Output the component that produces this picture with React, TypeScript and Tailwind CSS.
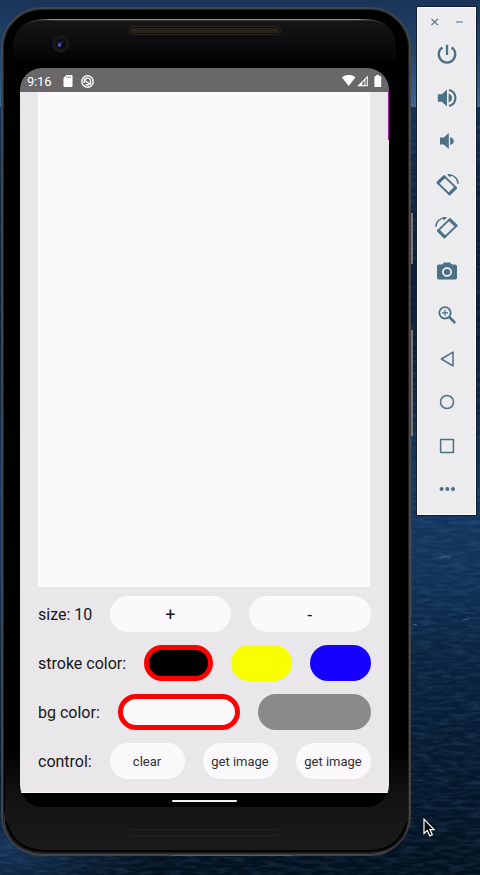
import type { ReactNode } from "react";
import { MdPhotoCamera } from "react-icons/md";

function Wallpaper() {
  return (
    <svg className="absolute inset-0" width="480" height="875" aria-hidden="true">
      <defs>
        <linearGradient id="sky" x1="0" y1="0" x2="0" y2="1">
          <stop offset="0" stopColor="#193457" />
          <stop offset="0.5" stopColor="#21456f" />
          <stop offset="1" stopColor="#3b6799" />
        </linearGradient>
        <linearGradient id="sea" x1="0" y1="0" x2="0" y2="1">
          <stop offset="0" stopColor="#12335a" />
          <stop offset="0.13" stopColor="#0b213e" />
          <stop offset="0.3" stopColor="#091d37" />
          <stop offset="0.5" stopColor="#113760" />
          <stop offset="0.6" stopColor="#11335b" />
          <stop offset="0.72" stopColor="#0a233f" />
          <stop offset="0.85" stopColor="#061b31" />
          <stop offset="1" stopColor="#03111f" />
        </linearGradient>
        <radialGradient id="glow">
          <stop offset="0" stopColor="#1e4473" stopOpacity="0.65" />
          <stop offset="1" stopColor="#1e4473" stopOpacity="0" />
        </radialGradient>
        <filter id="waves" x="0" y="0" width="1" height="1">
          <feTurbulence type="fractalNoise" baseFrequency="0.06 0.28" numOctaves="3" seed="7" />
          <feColorMatrix values="0 0 0 0 0.12  0 0 0 0 0.28  0 0 0 0 0.47  1.6 0 0 0 -0.65" />
        </filter>
      </defs>
      <rect width="480" height="107" fill="url(#sky)" />
      <rect y="107" width="480" height="768" fill="url(#sea)" />
      <ellipse cx="0" cy="850" rx="150" ry="60" fill="url(#glow)" />
      <rect y="125" width="480" height="750" filter="url(#waves)" opacity="0.28" />
      <path d="M439 558q5-2 12-1M463 620l6-1M412 624l5 1" stroke="#48719d" strokeWidth="0.8" fill="none" />
    </svg>
  );
}

function StatusBar() {
  return (
    <div className="flex h-[24px] shrink-0 items-center bg-[#69676a] pl-[7px] pr-[7px] pt-[2px] text-white">
      <span className="w-[36px] text-[13px] leading-none tracking-[-0.2px]">9:16</span>
      <svg width="10" height="12" viewBox="0 0 9 12" className="relative" aria-hidden="true">
        <path d="M3 0h5q1 0 1 1v10q0 1-1 1H1q-1 0-1-1V3z" fill="currentColor" />
        <path d="M3 2.2h5" stroke="#8b898c" strokeWidth="1.4" strokeDasharray="1 .7" />
      </svg>
      <svg width="13" height="13" viewBox="0 0 13 13" className="ml-[8px]" fill="none" stroke="currentColor" aria-hidden="true">
        <circle cx="6.5" cy="6.5" r="5.7" strokeWidth="1.4" />
        <path d="M3.2 8V6.5a3.3 3.3 0 0 1 6.2-1.6M3.8 5.5l5.6 4M9.6 5.2v3L7 9.7H4.5" strokeWidth="1.4" />
      </svg>
      <span className="flex-1" />
      <svg width="40" height="12" viewBox="0 0 40 12" aria-hidden="true">
        <path d="M0 2.6C4-1 9.6-1 13.4 2.6L6.7 11z" fill="currentColor" />
        <path d="M15.2 11.2h10.6V.4z" fill="currentColor" />
        <path d="M20.4 10.2V7.4l2-2v4.8zM23.4 10.2V4.6l1.4-1.5v7.1z" fill="#69676a" />
        <path d="M34.2 0h3v1.3h2V12h-6.8V1.3h1.8z" fill="currentColor" />
      </svg>
    </div>
  );
}

function Row({ label, children }: { label: string; children: ReactNode }) {
  return (
    <div className="flex h-[36px] items-center">
      <span className="shrink-0 whitespace-nowrap pt-[2px] text-[16px] leading-none text-[#171719]">{label}</span>
      <div className="ml-auto flex gap-[18px]">{children}</div>
    </div>
  );
}

const pill = "flex h-[36px] items-center justify-center rounded-full whitespace-nowrap leading-none";

function AppScreen() {
  return (
    <div className="flex h-[739px] w-[369px] shrink-0 flex-col overflow-hidden rounded-[22px] bg-black">
      <StatusBar />
      <div className="relative flex h-[701px] shrink-0 flex-col border-b border-[#f8f7f9] bg-[#e9e7e9] px-[18px]">
        <div className="h-[495px] w-[332px] shrink-0 bg-[#fbf9fc]" />
        <div className="mt-[9px] flex w-[332.5px] flex-col gap-[13.1px]">
          <Row label="size: 10">
            <button className={`${pill} w-[121.5px] bg-[#fbf9fc] pt-[2px] text-[18px] text-[#202022]`}>+</button>
            <button className={`${pill} w-[121.5px] bg-[#fbf9fc] pt-[2px] text-[18px] text-[#202022]`}>-</button>
          </Row>
          <Row label="stroke color:">
            <button aria-label="black" className={`${pill} w-[69.5px] border-[5px] border-[#ff0000] bg-black`} />
            <button aria-label="yellow" className={`${pill} w-[61px] bg-[#f8ff00]`} />
            <button aria-label="blue" className={`${pill} w-[60.5px] bg-[#1800ff]`} />
          </Row>
          <Row label="bg color:">
            <button aria-label="white" className={`${pill} w-[122px] border-[5px] border-[#ff0000] bg-[#fbf9fc]`} />
            <button aria-label="gray" className={`${pill} w-[113px] bg-[#8b898c]`} />
          </Row>
          <Row label="control:">
            <button className={`${pill} w-[75px] bg-[#fbf9fc] pt-px text-[13px] text-[#303032]`}>clear</button>
            <button className={`${pill} w-[75px] bg-[#fbf9fc] pt-px text-[13px] text-[#303032]`}>get image</button>
            <button className={`${pill} w-[75px] bg-[#fbf9fc] pt-px text-[13px] text-[#303032]`}>get image</button>
          </Row>
        </div>
        <span className="absolute right-0 top-0 h-[48px] w-[1px] bg-[#a414ac]" />
      </div>
      <div className="flex h-[14px] items-center justify-center pt-px">
        <span className="h-[2px] w-[65px] rounded-full bg-[#f1f0f2]" />
      </div>
    </div>
  );
}

function Phone() {
  return (
    <div className="relative mt-[7px] ml-px flex h-[849px] w-[410px] shrink-0 flex-col rounded-[41px] border-2 border-[#454446] bg-black shadow-[inset_0_0_0_1px_#222123]">
      <svg className="absolute -left-[2px] -top-[2px]" width="412" height="851" aria-hidden="true">
        <defs>
          <linearGradient id="forehead" x1="0" y1="0" x2="0" y2="1">
            <stop offset="0" stopColor="#171618" />
            <stop offset="1" stopColor="#030304" />
          </linearGradient>
          <linearGradient id="chin" x1="0" y1="0" x2="0" y2="1">
            <stop offset="0" stopColor="#000" />
            <stop offset="0.45" stopColor="#131213" />
            <stop offset="1" stopColor="#1c1b1c" />
          </linearGradient>
          <linearGradient id="edge" x1="0" y1="0" x2="1" y2="0">
            <stop offset="0" stopColor="#555" stopOpacity="0" />
            <stop offset="0.08" stopColor="#8b8b8d" />
            <stop offset="0.92" stopColor="#8b8b8d" />
            <stop offset="1" stopColor="#555" stopOpacity="0" />
          </linearGradient>
        </defs>
        <path d="M12 54V42q0-29 29-29h326q28 0 28 29v12z" fill="url(#forehead)" />
        <path d="M22 20q8-7.3 21-7.3h322q13 0 21 7.3" fill="none" stroke="url(#edge)" strokeWidth="1.2" />
        <path d="M4 740h403v68q0 37-38 37H41q-37 0-37-37z" fill="url(#chin)" />
        <path d="M5 815q8 29 40 29h322q31 0 39-29" fill="none" stroke="#020202" strokeWidth="2" />
        <path d="M3 806q0 40 39 40h328q38 0 38-40" fill="none" stroke="#333133" strokeWidth="1" />
        <path d="M171 848.5h120" stroke="#5c5b5d" strokeWidth="1" />
        <circle cx="60" cy="37" r="8" fill="#171517" stroke="#201e20" />
        <circle cx="60" cy="37" r="5" fill="#09080c" />
        <ellipse cx="58.5" cy="37.5" rx="2" ry="2.6" fill="#38369d" />
        <path d="M60 36l3-2" stroke="#2b2a63" />
        <circle cx="58.5" cy="38.5" r="1" fill="#6868d4" />
      </svg>
      <div className="relative mt-[17px] ml-[125px] h-[9px] w-[153px] shrink-0 rounded-full border border-[#2b2622] bg-[#100e0d] p-px">
        <div className="h-full rounded-full bg-[#29231f]" />
      </div>
      <div className="relative mt-[33px] ml-[17px]">
        <AppScreen />
      </div>
      <div className="relative mt-[22px] ml-[125px] h-[7px] w-[153px] shrink-0 rounded-full border border-[#232223] bg-[repeating-linear-gradient(90deg,#111_0px,#111_1px,#1e1d1e_1px,#1e1d1e_2px)]" />
      <span className="absolute -right-[4px] top-[204px] h-[51px] w-[2px] bg-[#777578]" />
      <span className="absolute -right-[4px] top-[321px] h-[106px] w-[2px] bg-[#777578]" />
      <span className="absolute -right-[3px] top-[427px] h-[181px] w-px bg-[#303e4b]" />
    </div>
  );
}

function RotateIcon({ mirrored = false }: { mirrored?: boolean }) {
  return (
    <svg width="24" height="24" viewBox="0 0 24 24" className={mirrored ? "-scale-x-100" : ""} fill="none" stroke="currentColor" aria-hidden="true">
      <path d="M9.3 3.4 21 14.6 14.4 21.2 2.6 9.9z" strokeWidth="1.9" strokeLinejoin="round" />
      <path d="m9.1 3.9-6 5.8M20.4 14.9l-5.8 5.8" strokeWidth="3.2" strokeLinecap="round" />
      <path d="M13.2 1.9c5.6-.5 9.9 3.6 9.9 8.9" strokeWidth="1.4" />
      <path d="M12 1.2h4.5l-1.4 3.2z" fill="currentColor" stroke="none" />
    </svg>
  );
}

function Outline({ d }: { d: string }) {
  return (
    <svg width="18" height="18" viewBox="0 0 18 18" fill="none" stroke="currentColor" strokeWidth="1.5" strokeLinejoin="round" aria-hidden="true">
      <path d={d} />
    </svg>
  );
}

function EmulatorToolbar() {
  const tools: ReactNode[] = [
    <svg width="22" height="22" viewBox="0 0 24 24" fill="none" stroke="currentColor" strokeWidth="2.5" aria-hidden="true">
      <path d="M12 2V13M7 4.9a9 9 0 1 0 10 0" />
    </svg>,
    <svg width="20" height="20" viewBox="0 0 20 20" fill="currentColor" aria-hidden="true">
      <path d="M.8 6.2h4L10 1.4v17.2l-5.2-4.8h-4zM11.6 5.4q3.4 1.3 3.4 4.6t-3.4 4.6z" />
      <path d="M12 2q6.4 1.7 6.4 8t-6.4 8" fill="none" stroke="currentColor" strokeWidth="2.1" />
    </svg>,
    <svg width="16" height="18" viewBox="0 0 16 18" fill="currentColor" aria-hidden="true">
      <path d="M1 5.6h3.7L9.8 1v16l-5.1-4.6H1zM11.2 4.9q3.6 1.3 3.6 4.1t-3.6 4.1z" />
    </svg>,
    <RotateIcon />,
    <RotateIcon mirrored />,
    <MdPhotoCamera size={24} className="scale-y-95" />,
    <svg width="20" height="20" viewBox="0 0 20 20" fill="none" stroke="currentColor" aria-hidden="true">
      <circle cx="8" cy="7.8" r="5.7" strokeWidth="1.8" />
      <path d="m12.2 12 6 6" strokeWidth="2.5" />
      <path d="M5 7.8h6M8 4.8v6" strokeWidth="1.2" />
    </svg>,
    <Outline d="M3.4 9 15 2.1v13.8z" />,
    <Outline d="M15.5 9A6.5 6.5 0 1 1 2.5 9a6.5 6.5 0 0 1 13 0" />,
    <Outline d="M2.6 2.6h12.8v12.8H2.6z" />,
    <svg width="18" height="6" viewBox="0 0 18 6" fill="currentColor" aria-hidden="true">
      <circle cx="3.6" cy="3" r="2" />
      <circle cx="9.3" cy="3" r="2" />
      <circle cx="15" cy="3" r="2" />
    </svg>,
  ];
  return (
    <div className="relative mt-[7px] ml-[6px] h-[508px] w-[59px] shrink-0 border border-[#fafafa] bg-[#ecebed] text-[#4b7187] shadow-[0_0_0_1px_#101d30]">
      <div className="flex h-[24.5px] items-center pl-[12px] pt-[4px]">
        <svg width="36" height="10" viewBox="0 0 36 10" fill="none" stroke="currentColor" strokeWidth="1.2" aria-hidden="true">
          <path d="m1.5 1.8 6.4 6.4M7.9 1.8 1.5 8.2M26 5h7" />
        </svg>
      </div>
      <div className="flex flex-col">
        {tools.map((icon, i) => (
          <div key={i} className="flex h-[43.5px] items-center justify-center">{icon}</div>
        ))}
      </div>
    </div>
  );
}

export default function App() {
  return (
    <main className="relative flex h-[875px] w-[480px] items-start overflow-hidden bg-[#0b213e] font-['Roboto',sans-serif]">
      <Wallpaper />
      <Phone />
      <EmulatorToolbar />
      <svg className="absolute left-[422px] top-[818px]" width="13" height="20" viewBox="0 0 13 20" aria-hidden="true">
        <path d="M2 1.2v14.3l3.3-3 2.5 5.4 2.5-1.2-2.4-5.1h4.2z" fill="#050505" stroke="white" strokeWidth="1.2" />
      </svg>
    </main>
  );
}
